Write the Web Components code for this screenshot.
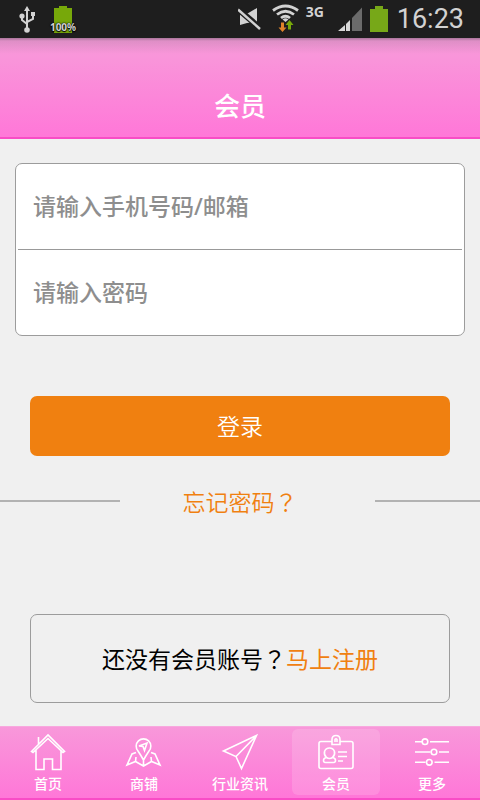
<!DOCTYPE html>
<html lang="zh-CN">
<head>
<meta charset="utf-8">
<meta name="viewport" content="width=device-width, initial-scale=1">
<title>会员</title>
<style>
  html, body { margin: 0; background: #f0f0f0; }
  body { font-family: "Noto Sans CJK SC", "Noto Sans", sans-serif; color: #000; }
</style>
</head>
<body>
<member-app></member-app>
<script>
const define = (name, html, setup) => {
  const template = document.createElement('template');
  template.innerHTML = html;
  customElements.define(name, class extends HTMLElement {
    connectedCallback() {
      if (this.shadowRoot) return;
      const root = this.attachShadow({ mode: 'open' });
      root.append(template.content.cloneNode(true));
      if (setup) setup(this, root);
    }
  });
};

define('status-bar', `
<style>
  :host { display: flex; height: 38px; box-sizing: border-box; padding: 0 16px 0 18px; background: #1e1e1e; color: #d2d2d2; }
  svg { display: block; flex: none; }
  .spacer { flex: 1; }
  .charge { position: relative; margin-left: 13px; }
  .charge span { position: absolute; left: 50%; top: 20px; transform: translateX(-50%); font: bold 10px/14px "Noto Sans", sans-serif; text-shadow: 0 0 2px #000, 0 0 1px #000, 0 1px 1px #000; }
  .wifi { margin-left: 9px; }
  .net { font: bold 14px/24px "Noto Sans", sans-serif; width: 32px; margin-left: 6px; }
  time { font: 27px/38px Roboto, sans-serif; margin-left: 8px; }
  .cell { margin-left: 7px; }
</style>
<svg width="18" height="38" fill="none" stroke="#d2d2d2" stroke-width="2"><path d="M9 29V10M9 24L4 20V15M9 22L15 19V15"/><path d="M9 6L12 11H6Z" fill="#d2d2d2" stroke="none"/><g fill="#d2d2d2" stroke="none"><circle cx="9" cy="30" r="2.8"/><circle cx="4" cy="16" r="2.6"/><path d="M13 12h4v4h-4z"/></g></svg>
<div class="charge"><svg width="28" height="38" fill="#77a80a"><path d="M5 8h5V6h8v2h5v25H5z"/></svg><span>100%</span></div>
<div class="spacer"></div>
<svg width="25" height="38"><path d="M2 15h5l12-7v17l-5-2.500-5 .5-7 2z" fill="#d2d2d2"/><path d="M1 10l21 18" stroke="#1e1e1e" stroke-width="6"/><path d="M0 9.500L22 29" stroke="#d2d2d2" stroke-width="2.500"/></svg>
<svg class="wifi" width="28" height="38"><g fill="none" stroke="#d2d2d2" stroke-width="2.800"><path d="M1 10.500Q13.500 1.500 26 10.500M5 14.500Q13.500 8 22 14.500M9 18Q13.500 14.500 18 18"/></g><path d="M10.500 19.500Q13.500 17 16.500 19.500L13.500 22Z" fill="#d2d2d2"/><path d="M9 22.500h3v5h2.500l-4 4.500-4-4.500H9z" fill="#e0832a"/><path d="M16 29.500h3V25h2.500l-4-5-4 5H16z" fill="#77a80a"/></svg>
<div class="net">3G</div>
<svg width="25" height="38"><path d="M0 31L7 25v6z M8 24l4-4v11H8z" fill="#d8d8d8"/><path d="M14 18l10-10.500V31H14z" fill="#6b6b6b"/></svg>
<svg class="cell" width="19" height="38" fill="#77a818"><path d="M0 9h5V6h8v3h5v23H0z"/></svg>
<time>16:23</time>
`);

define('title-bar', `
<style>
  :host { display: flex; flex-direction: column; align-items: center; box-sizing: border-box; padding: 48px 0 14px; border-bottom: 2px solid #f94cc6;
    background: linear-gradient(rgba(90,80,90,.5), rgba(120,100,120,.2) 3px, rgba(120,100,120,0) 16px), linear-gradient(#f89ada, #f995da 20%, #ff77d8); }
  h1 { margin: 0; color: #fff; font-size: 26px; line-height: 37px; font-weight: 500; }
</style>
<h1><slot></slot></h1>
`);

define('form-field', `
<style>
  :host { display: block; }
  input { display: block; box-sizing: border-box; width: 100%; height: 85px; padding: 0 17px 2px; border: 0; outline: 0; background: none; font-family: "Noto Sans", "Noto Sans CJK SC", sans-serif; font-size: 23px; font-weight: 500; color: #222; }
  input::placeholder { color: #8e8e8e; opacity: 1; }
</style>
<input>
`, (host, root) => {
  const input = root.querySelector('input');
  input.type = host.getAttribute('type') || 'text';
  input.placeholder = host.getAttribute('label');
  input.setAttribute('aria-label', host.getAttribute('label'));
});

define('login-form', `
<style>
  :host { display: block; }
  form { display: flex; flex-direction: column; gap: 60px; }
  .fields { margin: 0 15px; border: 1px solid #9c9c9c; border-radius: 7px; background: #fff; }
  .rule { height: 1px; margin: 0 2px; background: #999; }
  button { height: 60px; margin: 0 30px; padding: 0 0 2px; border: 0; border-radius: 7px; background: #f08010; color: #fff; font: 23px/58px "Noto Sans CJK SC", sans-serif; font-weight: 350; }
</style>
<form>
  <div class="fields">
    <form-field label="请输入手机号码/邮箱"></form-field>
    <div class="rule"></div>
    <form-field label="请输入密码" type="password"></form-field>
  </div>
  <button type="button">登录</button>
</form>
`);

define('forgot-row', `
<style>
  :host { display: flex; align-items: center; margin-top: 30px; }
  i { flex: 0 0 25%; height: 2px; background: #b2b2b2; }
  a { flex: 1; text-align: center; color: #f08010; text-decoration: none; font-size: 23px; line-height: 30px; font-weight: 350; }
  i:last-child { flex-basis: 105px; margin-left: 15px; }
  .q { font-family: "Noto Sans CJK TC", sans-serif; }
</style>
<i></i><a href="#forgot">忘记密码<span class="q" lang="zh-TW">？</span></a><i></i>
`);

define('register-box', `
<style>
  :host { display: block; margin: 98px 30px 23px; border: 1px solid #9c9c9c; border-radius: 7px; padding: 26px 0 27px; text-align: center; font-size: 23px; line-height: 34px; }
  a { color: #f08010; text-decoration: none; }
  .q { font-family: "Noto Sans CJK TC", sans-serif; }
</style>
还没有会员账号<span class="q" lang="zh-TW">？</span><a href="#register">马上注册</a>
`);

define('tab-item', `
<style>
  :host { display: flex; flex: 1; justify-content: center; }
  a { display: flex; flex-direction: column; align-items: center; gap: 2px; width: 88px; padding: 3px 0; border-radius: 6px; color: #fff; text-decoration: none; font-size: 14px; line-height: 18px; font-weight: 500; }
  :host([selected]) a { background: rgba(255,255,255,.15); }
  ::slotted(svg) { display: block; width: 40px; height: 40px; fill: none; stroke: #fff; stroke-width: 1.600; }
</style>
<a><slot name="icon"></slot><span><slot></slot></span></a>
`, (host, root) => {
  const a = root.querySelector('a');
  a.href = host.getAttribute('href');
  if (host.hasAttribute('selected')) a.setAttribute('aria-current', 'page');
});

define('tab-bar', `
<style>
  :host { display: block; }
  nav { display: flex; padding: 2px 0 3px; border-top: 1px solid #f8a8de; border-bottom: 2px solid #f94cc6; background: linear-gradient(#f898da, #ff77d8); }
</style>
<nav>
  <tab-item href="#home"><svg slot="icon" viewBox="0 0 40 40"><path d="M3.500 19.500L20 3L36.500 19.500L35 20.500L20 6.500L5 20.500ZM10.500 12V5M8 18V37.500H16V27H24.500V37.500H33V18"/></svg>首页</tab-item>
  <tab-item href="#shops"><svg slot="icon" viewBox="0 0 40 40"><path d="M19.500 28Q17 23.500 14 19A7.300 7.300 0 1 1 25 19Q22 23.500 19.500 28ZM12 20.500L8 22L3 33L11.500 29.500L19.500 34L27.500 29.500L36 33L31 22L27 20.500M12 25L11.500 29.500M27 25L27.500 29.500M19.500 28V34"/><path d="M15 14L23 11L20.500 18.500L19 14.500Z"/></svg>商铺</tab-item>
  <tab-item href="#news"><svg slot="icon" viewBox="0 0 40 40"><path d="M3.500 19L36.500 3.500L21.500 36.500L16 24.500ZM16 24.500L36.500 3.500"/></svg>行业资讯</tab-item>
  <tab-item href="#member" selected><svg slot="icon" viewBox="0 0 40 40"><path d="M16 9.500H5Q3 9.500 3 11.500V34.500Q3 36.500 5 36.500H35Q37 36.500 37 34.500V11.500Q37 9.500 35 9.500H24M16 12.500V7.500Q16 3.500 20 3.500T24 7.500V12.500ZM19 10V7.500Q20 6 21 7.500V10"/><path d="M10.500 25.500C6.500 21.500 8.500 16 13.500 16S20.500 21.500 16.500 25.500Q19.500 26 19.500 28.500Q19.500 30.500 17.500 30.500H9.500Q7.500 30.500 7.500 28.500Q7.500 26 10.500 25.500Q13.500 27.500 16.500 25.500M22 20H31M22 24.500H31M22 29H27"/></svg>会员</tab-item>
  <tab-item href="#more"><svg slot="icon" viewBox="0 0 40 40"><path d="M3 9.700H10M18 9.700H37M3 20H18.500M27 20H37M3 30.300H13.500M22.500 30.300H37"/><circle cx="13" cy="9.700" r="2.800"/><circle cx="22" cy="20" r="2.800"/><circle cx="17.300" cy="30.300" r="2.800"/></svg>更多</tab-item>
</nav>
`);

define('member-app', `
<style>
  :host { display: flex; flex-direction: column; min-height: 100vh; }
  main { flex: 1; padding-top: 24px; }
</style>
<status-bar></status-bar>
<title-bar>会员</title-bar>
<main>
  <login-form></login-form>
  <forgot-row></forgot-row>
  <register-box></register-box>
</main>
<tab-bar></tab-bar>
`);
</script>
</body>
</html>
